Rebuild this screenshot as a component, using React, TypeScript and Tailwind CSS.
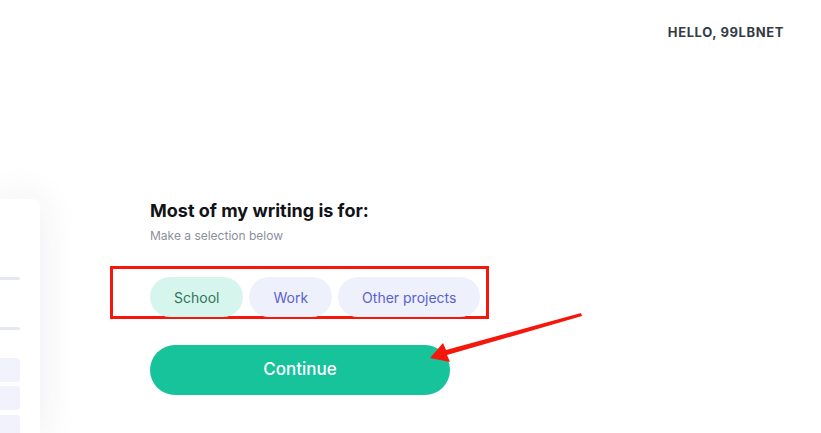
import { useState } from 'react'

const options = [
  { id: 'school', label: 'School' },
  { id: 'work', label: 'Work' },
  { id: 'other', label: 'Other projects' },
]

export default function App() {
  const [selected, setSelected] = useState('school')

  return (
    <div
      className="relative h-[433px] w-[821px] overflow-hidden bg-white"
      style={{ fontFamily: 'Inter, "Noto Sans", sans-serif' }}
    >
      {/* Header */}
      <div className="flex justify-end pr-[37px] pt-[24px]">
        <span className="text-[13px] font-bold leading-[16px] tracking-[0.6px] text-[#333a46]">HELLO, 99LBNET</span>
      </div>

      {/* Body */}
      <div className="mt-[159px] flex">
        {/* Side preview card */}
        <div className="flex h-[240px] w-[40px] shrink-0 flex-col rounded-tr-[8px] bg-white pt-[78px] shadow-[0_0_40px_rgba(40,45,90,0.09)]">
          <div className="h-[3px] w-[20px] rounded-r bg-[#e5e7f3]" />
          <div className="mt-[47px] h-[3px] w-[20px] rounded-r bg-[#e5e7f3]" />
          <div className="mt-[28px] h-[26px] w-[20px] rounded-r-[3px] bg-[#f1f2fb]" />
          <div className="mt-[4px] h-[25px] w-[20px] rounded-r-[3px] bg-[#f1f2fb]" />
          <div className="mt-[5px] h-[26px] w-[20px] rounded-r-[3px] bg-[#f1f2fb]" />
        </div>

        {/* Question */}
        <div className="ml-[110px] flex flex-col">
          <h1 className="text-[18px] font-bold leading-[24px] text-[#111317]">Most of my writing is for:</h1>
          <p className="mt-[5px] text-[12px] leading-[16px] text-[#8b909c]">Make a selection below</p>

          <div className="-ml-[40px] mt-[22px] flex h-[53px] w-[379px] gap-[6px] border-[3px] border-[#f5160c] pl-[37px] pt-[8px]">
            {options.map((o) => (
              <button
                key={o.id}
                onClick={() => setSelected(o.id)}
                className={
                  o.id === selected
                    ? 'h-[40px] rounded-full bg-[#d6f6ed] px-[24px] text-[14px] text-[#35725f]'
                    : 'h-[40px] rounded-full bg-[#eef0fb] px-[24px] text-[14px] text-[#5a62d0]'
                }
              >
                {o.label}
              </button>
            ))}
          </div>

          <button className="mt-[26px] h-[50px] w-[300px] rounded-full bg-[#17c39b] text-[17px] font-medium text-white">
            Continue
          </button>
        </div>
      </div>

      {/* Annotation arrow */}
      <svg className="absolute left-0 top-0" width="821" height="433" viewBox="0 0 821 433">
        <polygon
          points="581,313 446,350 443,343 430,358 450,362 447,355 582,316"
          fill="#f5160c"
        />
      </svg>
    </div>
  )
}
